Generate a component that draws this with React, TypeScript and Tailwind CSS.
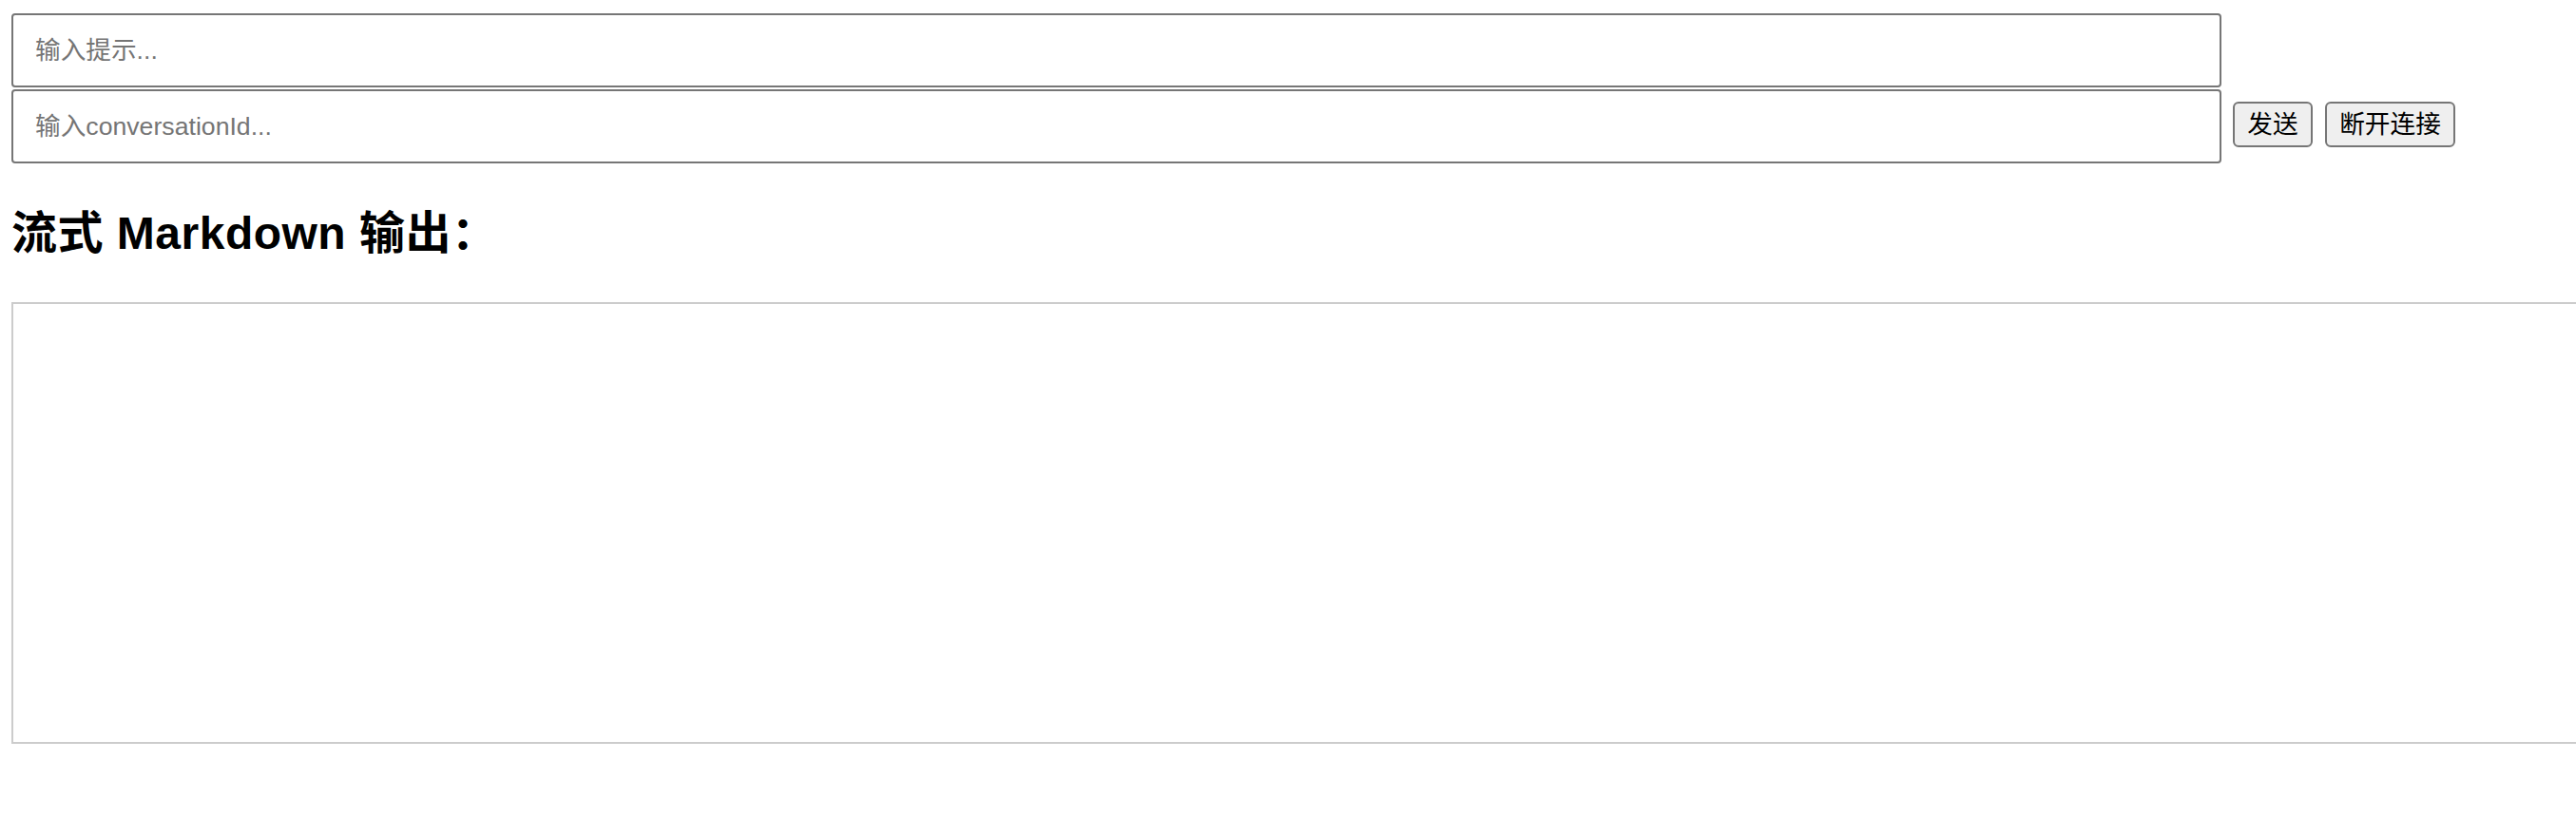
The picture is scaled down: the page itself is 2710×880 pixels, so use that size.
import React from "react";

export default function App() {
  return (
    <div className="w-full h-[880px] overflow-hidden bg-white pl-[12px] pt-[14px] font-['Liberation_Sans','Noto_Sans_CJK_SC',sans-serif]">
      <input
        type="text"
        placeholder="输入提示..."
        className="block w-[2325px] h-[78px] border-2 border-[#767676] rounded-[4px] px-[23px] text-[26.67px] text-black placeholder:text-[#757575] outline-none bg-white font-['Liberation_Sans','Noto_Sans_CJK_SC',sans-serif]"
      />
      <div className="flex items-start mt-[2px]">
        <input
          type="text"
          placeholder="输入conversationId..."
          className="block w-[2325px] h-[78px] border-2 border-[#767676] rounded-[4px] px-[23px] text-[26.67px] text-black placeholder:text-[#757575] outline-none bg-white shrink-0 font-['Liberation_Sans','Noto_Sans_CJK_SC',sans-serif]"
        />
        <button className="mt-[13px] ml-[12px] w-[84px] h-[48px] shrink-0 border-2 border-[#767676] rounded-[6px] bg-[#efefef] text-[26.67px] leading-none text-black text-center font-['Liberation_Sans','Noto_Sans_CJK_SC',sans-serif]">
          发送
        </button>
        <button className="mt-[13px] ml-[13px] w-[137px] h-[48px] shrink-0 border-2 border-[#767676] rounded-[6px] bg-[#efefef] text-[26.67px] leading-none text-black text-center font-['Liberation_Sans','Noto_Sans_CJK_SC',sans-serif]">
          断开连接
        </button>
      </div>
      <h2 className="mt-[46px] h-[56px] text-[48px] leading-[56px] tracking-[0.5px] font-bold text-black whitespace-nowrap">
        流式 Markdown 输出：
      </h2>
      <div className="mt-[44px] w-[2720px] h-[465px] border-2 border-[#cccccc] bg-white"></div>
    </div>
  );
}
